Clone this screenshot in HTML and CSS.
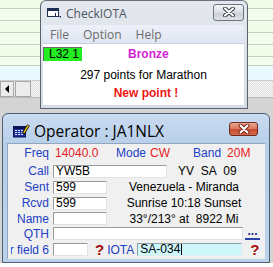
FILE: index.html
```html
<!DOCTYPE html>
<html>
<head>
<meta charset="utf-8">
<title>CheckIOTA</title>
<link rel="stylesheet" href="styles.css">
</head>
<body>
<div class="desk">
  <div class="bgapp">
    <div class="grid">
      <div class="row first"></div>
      <div class="row"></div>
      <div class="row"></div>
      <div class="row"></div>
      <div class="row"></div>
      <div class="row short"></div>
      <div class="row cyan tall"></div>
    </div>
    <div class="hscroll">
      <div class="sb-btn"><svg width="6" height="8" viewBox="0 0 6 8"><path d="M5 0 L1 4 L5 8 Z" fill="#000"/></svg></div>
      <div class="sb-thumb"></div>
      <div class="sb-track"></div>
    </div>
    <div class="bgfoot"></div>
  </div>

  <div class="win checkiota">
    <div class="titlebar">
      <svg class="appicon" width="14" height="10" viewBox="0 0 14 10">
        <rect x="0.5" y="0.5" width="11" height="8" fill="#fff" stroke="#1d2c52"/>
        <rect x="0.5" y="0.5" width="11" height="2.5" fill="#1d2c52"/>
        <path d="M8.5 5 V8.5 H12" fill="none" stroke="#1d2c52"/>
        <rect x="12.5" y="8" width="1.5" height="1.5" fill="#1d2c52"/>
      </svg>
      <span class="title">CheckIOTA</span>
      <div class="closebtn grey">
        <svg width="14" height="10" viewBox="0 0 14 10">
          <path d="M3 1.5 L11 8.5 M11 1.5 L3 8.5" stroke="#3c4148" stroke-width="4" stroke-linecap="round"/>
          <path d="M3 1.5 L11 8.5 M11 1.5 L3 8.5" stroke="#fff" stroke-width="2" stroke-linecap="round"/>
        </svg>
      </div>
    </div>
    <div class="menubar">
      <span>File</span><span>Option</span><span>Help</span>
    </div>
    <div class="ci-body">
      <div class="ci-row1"><span class="level">L32 1</span><span class="award">Bronze</span></div>
      <div class="ci-points">297 points for Marathon</div>
      <div class="ci-new">New point !</div>
    </div>
  </div>

  <div class="win operator">
    <div class="titlebar op-title">
      <svg class="opicon" width="17" height="14" viewBox="0 0 17 14">
        <rect x="0.5" y="2.5" width="12" height="10.5" fill="#1b2c9c" stroke="#0a1252"/>
        <rect x="1" y="3" width="11" height="2" fill="#0a1252"/>
        <g fill="#dfe6ff">
          <rect x="2" y="6" width="2" height="1"/><rect x="5" y="6" width="2" height="1"/><rect x="8" y="6" width="2" height="1"/>
          <rect x="2" y="8" width="2" height="1"/><rect x="5" y="8" width="2" height="1"/><rect x="8" y="8" width="2" height="1"/>
          <rect x="2" y="10" width="2" height="1"/><rect x="5" y="10" width="2" height="1"/><rect x="8" y="10" width="2" height="1"/>
        </g>
        <path d="M10.5 9.5 L15.5 1" stroke="#111" stroke-width="3"/>
        <path d="M10.8 8.8 L15.2 1.4" stroke="#f2c400" stroke-width="1.4"/>
      </svg>
      <span class="title op">Operator : JA1NLX</span>
      <div class="closebtn red">
        <svg width="14" height="10" viewBox="0 0 14 10">
          <path d="M3.5 1.5 L10.5 8.5 M10.5 1.5 L3.5 8.5" stroke="#7a2414" stroke-width="4" stroke-linecap="round"/>
          <path d="M3.5 1.5 L10.5 8.5 M10.5 1.5 L3.5 8.5" stroke="#fff" stroke-width="2" stroke-linecap="round"/>
        </svg>
      </div>
    </div>
    <div class="op-body">
      <div class="frow r-freq">
        <span class="lbl">Freq</span>
        <span class="val freqval">14040.0</span>
        <span class="lbl2">Mode</span>
        <span class="val modeval">CW</span>
        <span class="lbl2 bandlbl">Band</span>
        <span class="val bandval">20M</span>
      </div>
      <div class="frow r-call">
        <span class="lbl">Call</span>
        <span class="inp w-call">YW5B</span>
        <span class="pfx">YV&nbsp; SA&nbsp; 09</span>
      </div>
      <div class="frow r-sent">
        <span class="lbl">Sent</span>
        <span class="inp w-short">599</span>
        <span class="info">Venezuela - Miranda</span>
      </div>
      <div class="frow r-rcvd">
        <span class="lbl">Rcvd</span>
        <span class="inp w-short">599</span>
        <span class="info">Sunrise 10:18 Sunset</span>
      </div>
      <div class="frow r-name">
        <span class="lbl">Name</span>
        <span class="inp w-short"></span>
        <span class="info">33°/213° at&nbsp; 8922 Mi</span>
      </div>
      <div class="frow r-qth">
        <span class="lbl">QTH</span>
        <span class="inp w-qth"></span>
        <span class="dots">...</span>
      </div>
      <div class="frow r-f6">
        <span class="lbl lbl-f6">User field 6</span>
        <span class="inp w-f6"></span>
        <span class="q q1">?</span>
        <span class="lbl3">IOTA</span>
        <span class="inp iota">SA-034<span class="caret"></span></span>
        <span class="q q2">?</span>
      </div>
    </div>
  </div>
</div>
</body>
</html>
```

FILE: styles.css
```css
* { box-sizing: border-box; margin: 0; padding: 0; }
html, body { width: 273px; height: 267px; overflow: hidden; background: #fff; }
body { font-family: "Liberation Sans", Arial, sans-serif; font-size: 12px; color: #000; }

.desk { position: relative; width: 273px; height: 267px; background: #fff; }

/* background application */
.bgapp { display: flex; flex-direction: column; height: 263px; background: #d6d6d6; }
.grid { display: flex; flex-direction: column; }
.row { height: 12px; background: #f1fcea; border-bottom: 1px solid #c6cfc6; }
.row.first { height: 9px; }
.row.short { height: 9px; }
.row.cyan { background: #e9f9fd; }
.row.tall { height: 15px; }
.hscroll { display: flex; height: 17px; background: #e9e9e9; border-bottom: 1px solid #b9b9b9; }
.sb-btn { width: 14px; display: flex; align-items: center; justify-content: center; background: #ececec; border: 1px solid #a8a8a8; }
.sb-thumb { width: 16px; margin-left: 1px; background: #ececec; border: 1px solid #a8a8a8; }
.sb-track { flex: 1; background: repeating-conic-gradient(#d9d9d9 0 25%, #fdfdfd 0 50%) 0 0 / 2px 2px; }
.bgfoot { flex: 1; background: #d4d4d4; }

/* windows */
.win { position: absolute; display: flex; flex-direction: column; }
.titlebar { display: flex; align-items: center; }
.title { font-family: "Open Sans", "DejaVu Sans", sans-serif; font-size: 12px; white-space: nowrap; }
.closebtn { margin-left: auto; display: flex; align-items: center; justify-content: center; border-radius: 3px; flex: none; }

.checkiota {
  left: 40px; top: 0; width: 208px; height: 109px;
  border: 1px solid #5a636e; border-top-color: #6a737e; border-radius: 6px 6px 0 0;
  background: linear-gradient(#e4e8ee, #d6dce5);
  padding: 0 3px 3px 2px;
}
.checkiota .titlebar { height: 24px; padding-left: 4px; }
.appicon { margin-right: 5px; }
.checkiota .title { color: #4d5662; }
.closebtn.grey {
  width: 31px; height: 17px; margin-bottom: 2px;
  border: 1px solid #6f7780;
  background: linear-gradient(#f3f5f8, #d9dde3 50%, #c9ced6 51%, #dfe3e8);
}
.menubar {
  height: 19px; display: flex; align-items: center; gap: 14px; padding-left: 7px;
  background: linear-gradient(#edf0f8, #e0e6f2);
  border-bottom: 1px solid #c9d0dd;
  font-family: "Open Sans", "DejaVu Sans", sans-serif; font-size: 12px; color: #6c6c6c;
}
.ci-body { flex: 1; background: #fff; display: flex; flex-direction: column; padding-top: 3px; }
.ci-row1 { display: flex; align-items: center; height: 14px; }
.level {
  width: 39px; height: 14px; padding-left: 5px; line-height: 13px;
  background: #22ee22; border-top: 1px solid #6a6a6a; border-left: 1px solid #6a6a6a;
}
.award { margin-left: 46px; color: #d41fd4; font-weight: bold; }
.ci-points { margin-top: 7px; height: 14px; line-height: 14px; text-align: center; }
.ci-new { margin-top: 4px; height: 14px; line-height: 14px; text-align: center; color: #ee1515; font-weight: bold; padding-left: 5px; }

.operator {
  left: 2px; top: 113px; width: 268px; height: 150px;
  border: 1px solid #4e5d70; border-radius: 6px 6px 0 0;
  background: linear-gradient(#c9dbf1, #b8cfe9 30px, #bcd2eb);
  padding: 0 4px 3px 4px;
}
.op-title { height: 29px; padding: 4px 7px 0 6px; }
.opicon { margin-right: 4px; flex: none; }
.title.op { font-size: 15.5px; color: #000; }
.closebtn.red {
  width: 29px; height: 14px; margin-bottom: 3px;
  border: 1px solid #6e2a1c;
  background: linear-gradient(#eaa995, #d9765c 50%, #c34a2e 51%, #d6694c);
}
.op-body { flex: 1; background: #f0f0f0; border: 1px solid #93a6bf; border-right: 0; border-bottom: 0; overflow: hidden; }

.frow { display: flex; align-items: center; height: 16px; }
.r-freq { height: 18px; }
.r-call { margin-top: 1px; }
.r-name, .r-qth { height: 15px; }
.r-f6 { height: 17px; }
.lbl { width: 41px; flex: none; display: flex; justify-content: flex-end; overflow: hidden; white-space: nowrap; color: #2140c6; }
.lbl-f6 { width: 38px; margin-left: 3px; }
.lbl2, .lbl3 { color: #2140c6; white-space: nowrap; }
.val { color: #e81a1e; white-space: nowrap; }
.freqval { margin-left: 6px; width: 61px; }
.modeval { margin-left: 4px; }
.bandlbl { margin-left: 23px; }
.bandval { margin-left: 6px; }

.inp {
  height: 13px; margin-left: 4px; background: #fff; flex: none;
  border-top: 1px solid #9a9a9a; border-left: 1px solid #9a9a9a;
  border-right: 1px solid #e3e3e3; border-bottom: 1px solid #e3e3e3;
  padding-left: 2px; line-height: 11px; white-space: nowrap;
}
.w-call { width: 114px; }
.w-short { width: 54px; }
.w-qth { width: 190px; }
.w-f6 { width: 35px; }
.pfx { margin-left: 11px; white-space: nowrap; }
.info { flex: 1; text-align: center; padding-right: 4px; white-space: nowrap; }
.dots {
  width: 15px; height: 13px; margin-left: 2px; text-align: center; line-height: 8px;
  border-bottom: 2px solid #2a3fa8; color: #1b2b88; font-weight: bold;
}
.q { color: #a30d0d; font-size: 15px; font-weight: bold; line-height: 15px; }
.q1 { margin-left: 7px; }
.lbl3 { margin-left: 3px; }
.iota { width: 105px; margin-left: 3px; background: #cdf7fb; border-color: #8fa0a3 #d8eef0 #d8eef0 #8fa0a3; display: flex; align-items: center; }
.caret { display: inline-block; width: 1px; height: 11px; background: #000; margin-left: 1px; }
.q2 { margin-left: 8px; }
```
